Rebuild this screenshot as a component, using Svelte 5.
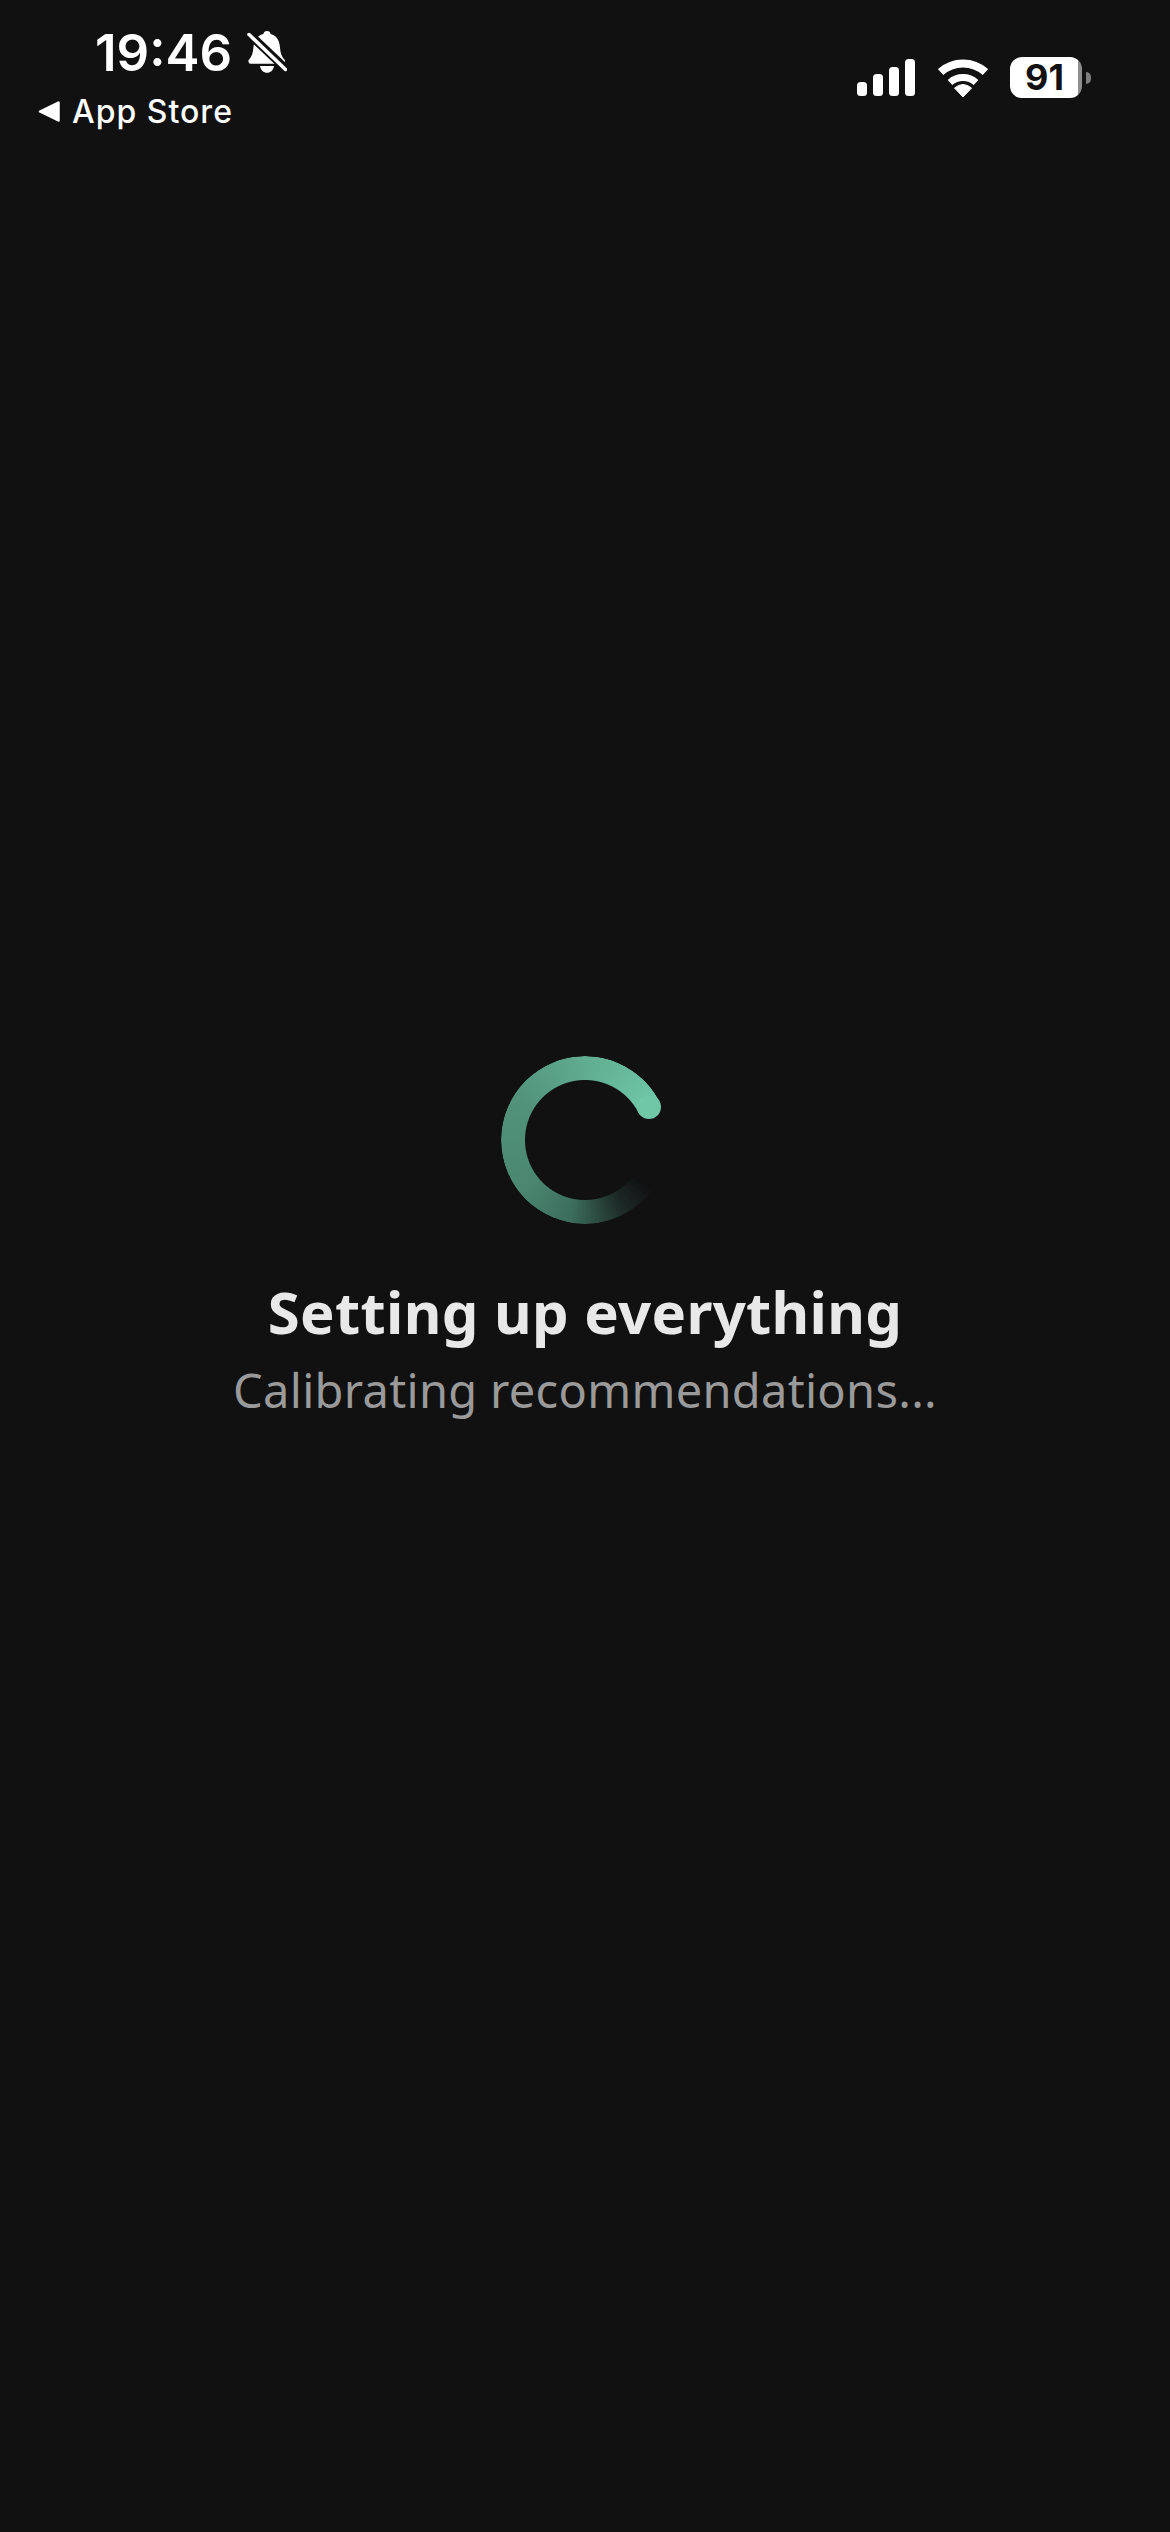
<script>
  const title = 'Setting up everything';
  const subtitle = 'Calibrating recommendations...';
</script>

<div class="screen">
  <header class="status">
    <div class="left">
      <div class="clock">
        <span class="time">19:46</span>
        <svg class="bell" viewBox="0 0 40 42" width="40" height="42" aria-hidden="true">
          <path d="M20 0c2 0 3.300 1.300 3.600 3 6 1.500 8.900 6.500 9.400 13.500.4 5 1.300 8.600 4.600 12.300 1.200 1.400.3 3.900-1.400 3.900H3.300c-1.700 0-2.600-2.500-1.400-3.900C5.200 25.100 6 21.500 6.400 16.500 6.900 9.500 10.400 4.500 16.400 3c.3-1.700 1.600-3 3.600-3z" fill="#fff"/>
          <path d="M13 35h14c-.6 4-3.600 6.800-7 6.800s-6.400-2.800-7-6.800z" fill="#fff"/>
          <path d="M0 1l39 37" stroke="#111112" stroke-width="8.500" fill="none"/>
          <path d="M2 3.500l36.500 35" stroke="#fff" stroke-width="3.500" fill="none" stroke-linecap="round"/>
        </svg>
      </div>
      <div class="back">
        <svg viewBox="0 0 22 21" width="22" height="21" aria-hidden="true">
          <path d="M2 10.500L20.500 1.500v18z" fill="#fff" stroke="#fff" stroke-width="2.500" stroke-linejoin="round"/>
        </svg>
        <span>App Store</span>
      </div>
    </div>
    <div class="right">
      <svg viewBox="0 0 58 37" width="58" height="37" aria-hidden="true">
        <rect x="0" y="23" width="10" height="14" rx="3.500" fill="#fff"/>
        <rect x="16" y="15" width="10" height="22" rx="3.500" fill="#fff"/>
        <rect x="32" y="8" width="10" height="29" rx="3.500" fill="#fff"/>
        <rect x="48" y="0" width="10" height="37" rx="3.500" fill="#fff"/>
      </svg>
      <svg viewBox="0 0 50 38" width="50" height="38" aria-hidden="true">
        <path d="M2.600 13.100A33.500 33.500 0 0 1 47.400 13.100" fill="none" stroke="#fff" stroke-width="8"/>
        <path d="M12 23.500A19.500 19.500 0 0 1 38 23.500" fill="none" stroke="#fff" stroke-width="7"/>
        <path d="M25 38L16.500 29Q25 22 33.500 29Z" fill="#fff" stroke="#fff" stroke-width="1" stroke-linejoin="round"/>
      </svg>
      <div class="battery">
        <div class="cell"><span>91</span></div>
        <div class="nub"></div>
      </div>
    </div>
  </header>

  <main class="loading">
    <div class="spinner">
      <div class="ring"></div>
      <div class="cap"></div>
    </div>
    <h1>{title}</h1>
    <p>{subtitle}</p>
  </main>
</div>

<style>
  :global(body) {
    margin: 0;
    background: #111112;
  }

  .screen {
    width: 1170px;
    height: 2532px;
    overflow: hidden;
    background: #111112;
    color: #fff;
  }

  .status {
    display: flex;
    justify-content: space-between;
    align-items: flex-start;
    height: 120px;
    padding: 26px 79px 0 38px;
    box-sizing: border-box;
    font-family: Inter, "Liberation Sans", sans-serif;
  }

  .clock {
    display: flex;
    align-items: center;
    gap: 15px;
    padding-left: 57px;
    height: 54px;
  }

  .time {
    font-size: 51px;
    font-weight: 600;
    line-height: 54px;
  }

  .bell {
    margin-top: -2px;
  }

  .back {
    display: flex;
    align-items: center;
    gap: 12px;
    height: 34px;
    margin-top: 14px;
    font-size: 32px;
    font-weight: 500;
    letter-spacing: 1px;
  }

  .right {
    display: flex;
    align-items: center;
    gap: 23px;
    padding-top: 31px;
  }

  .battery {
    display: flex;
    align-items: center;
    gap: 4px;
    margin-left: -1px;
  }

  .cell {
    display: flex;
    align-items: center;
    box-sizing: border-box;
    width: 72px;
    height: 41px;
    padding-left: 15px;
    border-radius: 12px;
    background: linear-gradient(to right, #fff 94%, #8e8e8e 94%);
    color: #111;
    font-size: 36px;
    font-weight: 700;
    line-height: 41px;
  }

  .nub {
    width: 5px;
    height: 12px;
    border-radius: 0 6px 6px 0;
    background: #7d7d7d;
  }

  .loading {
    display: flex;
    flex-direction: column;
    align-items: center;
    padding-top: 936px;
    font-family: "Noto Sans", "Open Sans", sans-serif;
  }

  .spinner {
    position: relative;
    width: 168px;
    height: 168px;
  }

  .ring {
    width: 100%;
    height: 100%;
    border-radius: 50%;
    background: conic-gradient(
      from 126deg,
      rgba(60, 105, 90, 0) 0deg,
      rgba(60, 105, 90, 0.3) 26deg,
      #3c6d5d 64deg,
      #4a8670 104deg,
      #52937c 176deg,
      #6fc7a8 297deg,
      transparent 297deg
    );
    -webkit-mask: radial-gradient(circle, transparent 59.500px, #000 60.500px, #000 83.500px, transparent 84.500px);
    mask: radial-gradient(circle, transparent 59.500px, #000 60.500px, #000 83.500px, transparent 84.500px);
  }

  /* rounded head of the arc */
  .cap {
    position: absolute;
    left: 136px;
    top: 39px;
    width: 24px;
    height: 24px;
    border-radius: 50%;
    background: #6fc7a8;
  }

  h1 {
    margin: 50px 0 0;
    font-size: 58px;
    font-weight: 700;
    line-height: 76px;
    letter-spacing: 0.3px;
    color: #e8e8e8;
  }

  p {
    margin: 10px 0 0;
    font-size: 47px;
    font-weight: 400;
    line-height: 60px;
    letter-spacing: 0.3px;
    color: #9a9a9a;
  }
</style>
